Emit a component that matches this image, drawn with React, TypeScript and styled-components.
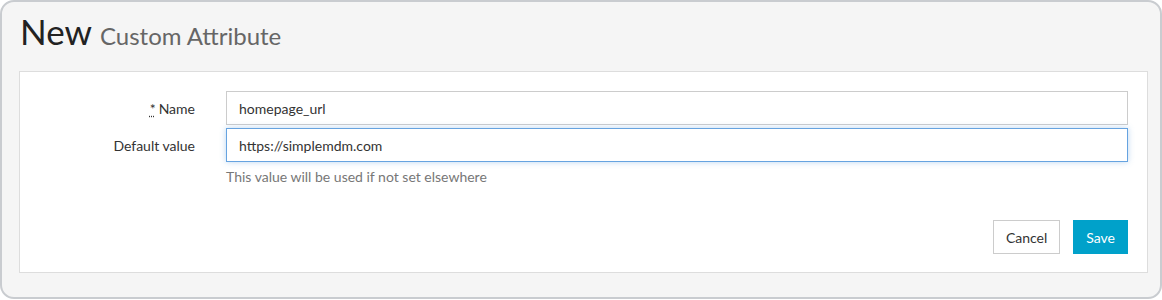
import styled, { createGlobalStyle } from "styled-components";

const GlobalStyle = createGlobalStyle`
  html, body {
    margin: 0;
    padding: 0;
    background: #ffffff;
  }
  body {
    font-family: Lato, "Liberation Sans", sans-serif;
    color: #333;
  }
`;

const Frame = styled.div`
  box-sizing: border-box;
  width: 1162px;
  height: 299px;
  border: 2px solid #c9ccd0;
  border-radius: 14px;
  background: #f5f5f5;
  padding: 0 12px 0 17px;
`;

const Title = styled.h1`
  margin: 0;
  height: 69px;
  display: flex;
  align-items: baseline;
  gap: 8px;
  padding: 12px 0 0 1px;
  box-sizing: border-box;
  font-weight: 400;
  font-size: 35px;
  color: #222;
  line-height: 1;
`;

const Subtitle = styled.small`
  font-size: 24px;
  color: #666;
`;

const Panel = styled.div`
  box-sizing: border-box;
  height: 202px;
  background: #fff;
  border: 1px solid #dddddd;
  padding: 19px 19px 18px 0;
  display: flex;
  flex-direction: column;
`;

const Row = styled.div<{ $gap?: number }>`
  display: grid;
  grid-template-columns: 206px 1fr;
  align-items: start;
  margin-bottom: ${(p) => p.$gap ?? 3}px;
`;

const Label = styled.label`
  text-align: right;
  padding-right: 31px;
  padding-top: 9px;
  font-size: 14px;
  color: #333;
`;

const Req = styled.abbr`
  text-decoration: underline dotted;
  text-underline-offset: 2px;
  cursor: help;
  margin-right: 3px;
`;

const Input = styled.input<{ $focus?: boolean }>`
  box-sizing: border-box;
  width: 100%;
  height: 34px;
  padding: 0 12px;
  font-family: Lato, "Liberation Sans", sans-serif;
  font-size: 14px;
  color: #333;
  border: 1px solid ${(p) => (p.$focus ? "#66a3e0" : "#cccccc")};
  box-shadow: ${(p) => (p.$focus ? "0 0 6px rgba(102,163,224,0.45)" : "none")};
  border-radius: 0;
  outline: none;
  background: #fff;
`;

const Help = styled.p`
  grid-column: 2;
  margin: 6px 0 0;
  font-size: 14px;
  color: #777;
`;

const Actions = styled.div`
  margin-top: auto;
  display: flex;
  justify-content: flex-end;
  gap: 13px;
`;

const Button = styled.button<{ $primary?: boolean }>`
  box-sizing: border-box;
  height: 34px;
  padding: 0 12px;
  font-family: Lato, "Liberation Sans", sans-serif;
  font-size: 14px;
  border-radius: 0;
  border: 1px solid ${(p) => (p.$primary ? "#00a1ca" : "#cccccc")};
  background: ${(p) => (p.$primary ? "#00a1ca" : "#ffffff")};
  color: ${(p) => (p.$primary ? "#ffffff" : "#333333")};
`;

export default function App() {
  return (
    <>
      <GlobalStyle />
      <Frame>
        <Title>
          New <Subtitle>Custom Attribute</Subtitle>
        </Title>
        <Panel>
          <Row>
            <Label>
              <Req title="required">*</Req>Name
            </Label>
            <Input defaultValue="homepage_url" />
          </Row>
          <Row $gap={0}>
            <Label>Default value</Label>
            <Input $focus defaultValue="https://simplemdm.com" />
            <Help>This value will be used if not set elsewhere</Help>
          </Row>
          <Actions>
            <Button>Cancel</Button>
            <Button $primary>Save</Button>
          </Actions>
        </Panel>
      </Frame>
    </>
  );
}
